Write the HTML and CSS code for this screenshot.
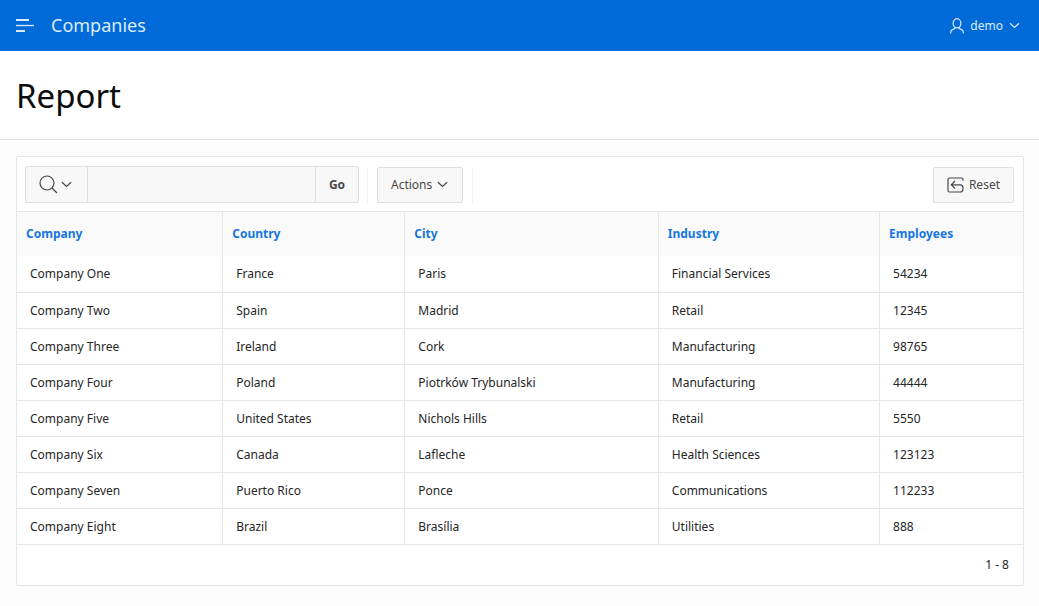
FILE: index.html
```html
<!DOCTYPE html>
<html lang="en">
<head>
<meta charset="utf-8">
<title>Companies</title>
<link rel="stylesheet" href="styles.css">
</head>
<body>
<header class="topbar">
  <button class="nav-toggle" type="button" aria-label="Main navigation">
    <svg width="19" height="13" viewBox="0 0 19 13"><path d="M1 1h13M1 12h9" stroke="currentColor" stroke-width="2"/><path d="M1 6.500h18" stroke="currentColor" stroke-width="1.300"/></svg>
  </button>
  <a class="brand" href="#">Companies</a>
  <button class="user-menu" type="button">
    <svg width="14" height="16" viewBox="0 0 14 16" fill="none" stroke="currentColor" stroke-width="1.200"><ellipse cx="7" cy="5.300" rx="3.900" ry="4.600"/><path d="M.7 15.500v-1.300q0-2 1.800-2.600L4.800 10.500l.5-1.300M13.300 15.500v-1.300q0-2-1.800-2.600L9.200 10.500l-.5-1.300"/></svg>
    <span>demo</span>
    <svg width="11" height="7" viewBox="0 0 11 7" fill="none" stroke="currentColor" stroke-width="1.200"><path d="M1 1.200l4.500 4.300L10 1.200"/></svg>
  </button>
</header>
<div class="title-bar"><h1 class="title">Report</h1></div>
<main class="content">
  <section class="report">
    <div class="toolbar">
      <form class="search">
        <button class="search-columns" type="button" aria-label="Select columns to search">
          <svg width="19" height="19" viewBox="0 0 19 19" fill="none" stroke="currentColor" stroke-width="1.200"><circle cx="8" cy="8" r="7"/><path d="M13 13l5 5"/></svg>
          <svg width="11" height="7" viewBox="0 0 11 7" fill="none" stroke="currentColor" stroke-width="1.200"><path d="M1 1.200l4.500 4.300L10 1.200"/></svg>
        </button>
        <input class="search-text" type="text" aria-label="Search report">
        <button class="go" type="button">Go</button>
      </form>
      <div class="actions-group">
        <button class="button" type="button">Actions
          <svg width="11" height="7" viewBox="0 0 11 7" fill="none" stroke="currentColor" stroke-width="1.200"><path d="M1 1.200l4.500 4.300L10 1.200"/></svg>
        </button>
      </div>
      <button class="button reset" type="button">
        <svg width="17" height="16" viewBox="0 0 17 16" fill="none" stroke="currentColor" stroke-width="1.200"><path d="M16 3.800V2.500Q16 1 14.500 1h-12Q1 1 1 2.500v11q0 1.500 1.500 1.500h10.700q2.800 0 2.800-3.600t-2.800-3.600H4.500M8 4L4.300 7.800 8 11.500"/></svg>
        Reset
      </button>
    </div>
    <table class="grid">
      <colgroup><col class="col-company"><col class="col-country"><col class="col-city"><col class="col-industry"><col></colgroup>
      <thead><tr>
        <th><a href="#">Company</a></th><th><a href="#">Country</a></th><th><a href="#">City</a></th><th><a href="#">Industry</a></th><th><a href="#">Employees</a></th>
      </tr></thead>
      <tbody>
        <tr><td>Company One</td><td>France</td><td>Paris</td><td>Financial Services</td><td>54234</td></tr>
        <tr><td>Company Two</td><td>Spain</td><td>Madrid</td><td>Retail</td><td>12345</td></tr>
        <tr><td>Company Three</td><td>Ireland</td><td>Cork</td><td>Manufacturing</td><td>98765</td></tr>
        <tr><td>Company Four</td><td>Poland</td><td>Piotrków Trybunalski</td><td>Manufacturing</td><td>44444</td></tr>
        <tr><td>Company Five</td><td>United States</td><td>Nichols Hills</td><td>Retail</td><td>5550</td></tr>
        <tr><td>Company Six</td><td>Canada</td><td>Lafleche</td><td>Health Sciences</td><td>123123</td></tr>
        <tr><td>Company Seven</td><td>Puerto Rico</td><td>Ponce</td><td>Communications</td><td>112233</td></tr>
        <tr><td>Company Eight</td><td>Brazil</td><td>Brasília</td><td>Utilities</td><td>888</td></tr>
      </tbody>
    </table>
    <div class="pagination">1 - 8</div>
  </section>
</main>
</body>
</html>
```
FILE: styles.css
```css
* { box-sizing: border-box; }
body {
  margin: 0;
  min-height: 100vh;
  background: #fcfcfc;
  color: #262626;
  font: 12px/16px "Noto Sans", "Open Sans", sans-serif;
}
button, input { font: inherit; color: inherit; margin: 0; padding: 0; }
button { display: flex; align-items: center; justify-content: center; cursor: pointer; }
svg { display: block; flex: none; }
a { text-decoration: none; color: inherit; }

.topbar {
  display: flex;
  align-items: center;
  height: 51px;
  padding: 0 19px 0 15px;
  background: #006bd8;
  color: #dcebfc;
}
.nav-toggle, .user-menu { border: 0; background: none; }
.nav-toggle { margin-right: 17px; }
.brand { font-size: 18px; line-height: 24px; padding-bottom: 2px; }
.user-menu { margin-left: auto; gap: 6px; }

.title-bar {
  padding: 23px 16px 21px;
  background: #fff;
  border-bottom: 1px solid #e2e2e2;
}
.title { margin: 0; font-size: 33px; line-height: 44px; font-weight: 400; color: #0c0c0c; }

.content { padding: 16px 15px 16px 16px; }
.report { background: #fff; border: 1px solid #e6e6e6; border-radius: 2px; }
.toolbar { display: flex; align-items: center; padding: 9px 9px 8px 8px; color: #484848; }
.search { display: flex; height: 37px; width: 334px; border: 1px solid #dfdfdf; border-radius: 2px; background: #f8f8f8; }
.search-columns { width: 62px; padding-right: 3px; gap: 3px; border: 0; border-right: 1px solid #dfdfdf; background: none; }
.search-text { flex: 1; min-width: 0; padding: 0 8px; border: 0; background: none; }
.go { width: 43px; border: 0; border-left: 1px solid #dfdfdf; background: none; font-weight: 700; }
.actions-group { margin-left: 8px; padding: 0 9px; border: solid #f0f0f0; border-width: 0 1px; }
.button { height: 36px; padding: 0 13px; gap: 5px; border: 1px solid #dfdfdf; border-radius: 2px; background: #f8f8f8; }
.actions-group .button { padding: 0 14px 0 13px; }
.reset { margin-left: auto; }

.grid { width: 100%; table-layout: fixed; border-collapse: separate; border-spacing: 0; }
.col-company { width: 20.4%; }
.col-country { width: 18.1%; }
.col-city { width: 25.2%; }
.col-industry { width: 22%; }
.grid th {
  height: 45px;
  padding: 0 9px;
  border-top: 1px solid #e6e6e6;
  background: #fafafa;
  color: #1476e0;
  text-align: left;
  font-weight: 700;
}
.grid td { height: 36px; padding: 0 13px; border-bottom: 1px solid #e6e6e6; }
.grid tbody tr:first-child td { height: 37px; }
.grid th + th, .grid td + td { border-left: 1px solid #e6e6e6; }
.pagination { padding: 12px 14px; text-align: right; }
```
